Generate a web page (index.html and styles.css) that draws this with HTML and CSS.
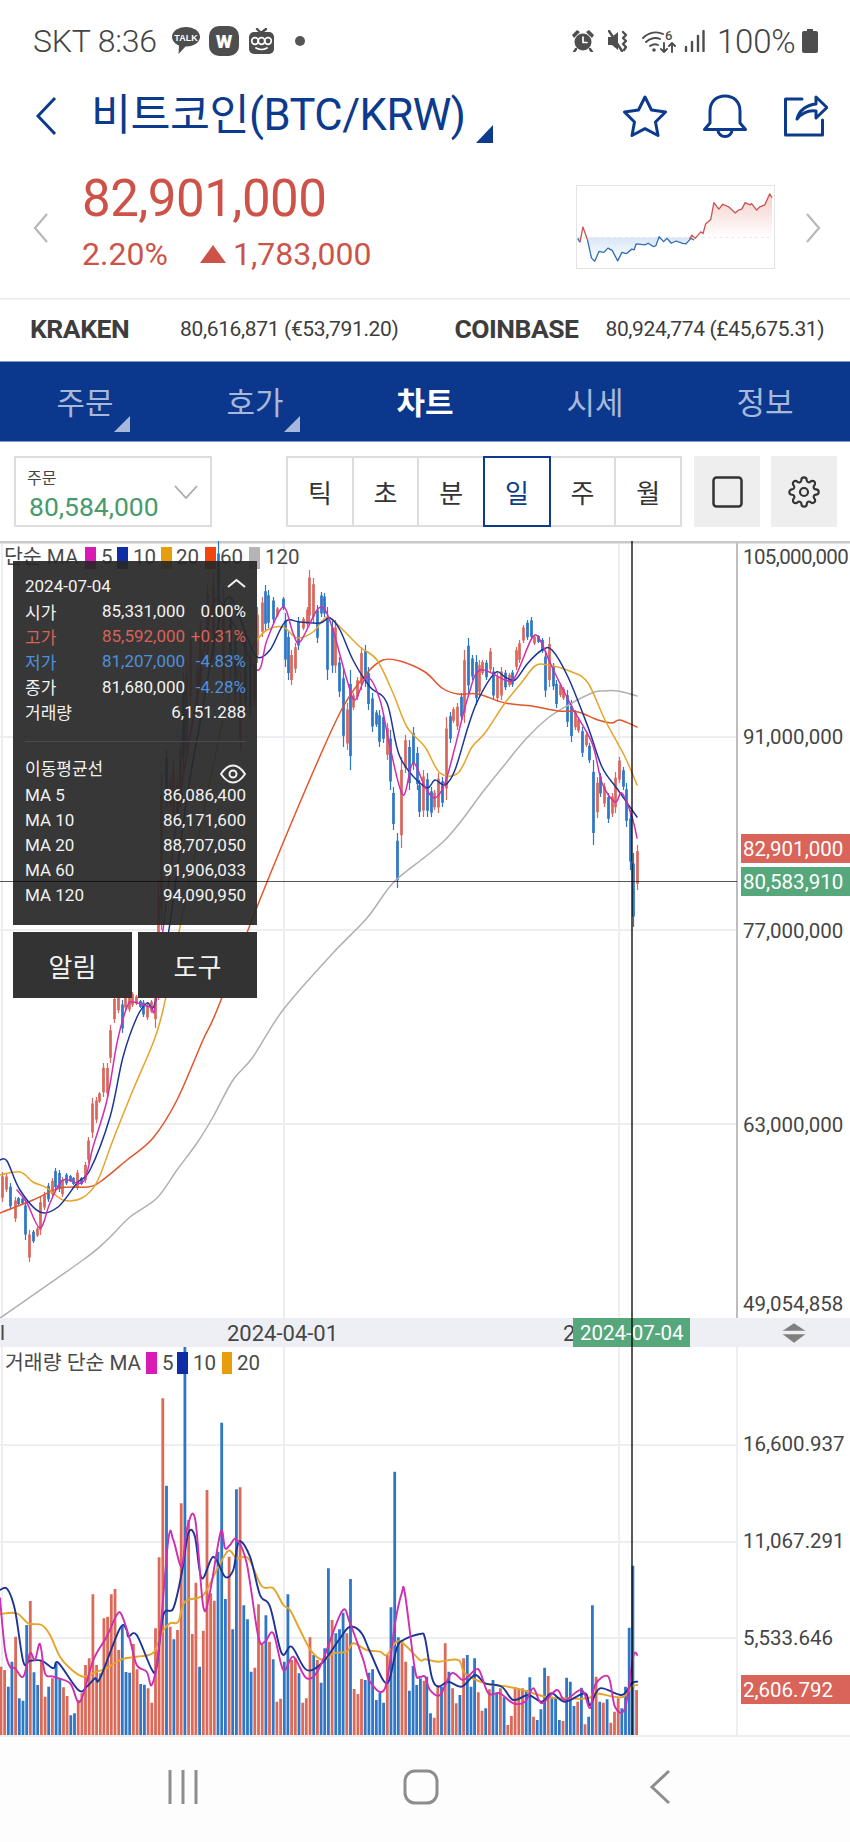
FILE: index.html
```html
<!DOCTYPE html>
<html lang="ko">
<head>
<meta charset="utf-8">
<title>비트코인(BTC/KRW)</title>
<link rel="stylesheet" href="styles.css">
</head>
<body>
<div class="phone">
  <div class="status">
    <span class="status-time">SKT 8:36</span>
    <svg class="st-talk" viewBox="0 0 28 28"><path class="fill-grey" d="M14 0C6.3 0 0 4.300 0 9.800c0 3.700 2.800 7 7 8.700l-.5 8.500 7-7.500c8 .3 14.500-4 14.500-9.700C28 4.300 21.700 0 14 0z"/><text class="talk-text" x="14" y="13.500" text-anchor="middle">TALK</text></svg>
    <span class="st-w">W</span>
    <svg class="st-face" viewBox="0 0 25 26"><path class="line-grey" d="M8 1l4 4 5-4"/><rect class="fill-grey" x="0" y="4" width="25" height="22" rx="5"/><circle class="eye-w" cx="6" cy="13" r="3.300"/><circle class="eye-w" cx="12.500" cy="13" r="3.300"/><circle class="eye-w" cx="19" cy="13" r="3.300"/><path class="eye-w" d="M7 20q5.500 3 11 0"/></svg>
    <span class="st-dot"></span>
    <div class="status-right">
      <svg class="st-alarm" viewBox="0 0 22 22"><circle class="fill-grey" cx="11" cy="12" r="8.500"/><path class="fill-grey" d="M0 5l5-5 3 2-6 6zM22 5l-5-5-3 2 6 6z"/><path class="line-grey" d="M4 19l-2 3M18 19l2 3"/><path class="eye-w" d="M11 7v5.500h4"/></svg>
      <svg class="st-mute" viewBox="0 0 21 22"><path class="fill-grey" d="M0 7h4l6-5v18l-6-5H0z"/><path class="line-grey" d="M1 1l13 20"/><path class="line-grey" d="M15 2l3 3-3 3 3 3-3 3 3 3-2 3"/></svg>
      <svg class="st-wifi" viewBox="0 0 34 24"><path class="line-thin" d="M1 9C7 3 15 2 21 5M4 13c4-4 10-5 14-3M8 17c3-2 6-2 8-1"/><circle class="fill-grey" cx="12" cy="21" r="1.800"/><text class="wifi-six" x="23" y="11">6</text><path class="line-thin" d="M22 14v9m-3-3l3 3 3-3M30 23v-9m-3 3l3-3 3 3"/></svg>
      <svg class="st-signal" viewBox="0 0 21 22"><path class="bar-line" d="M2 17v4M8 12v9M14 6v15M19.500 1v20"/></svg>
      <span class="status-batt">100%</span>
      <svg class="st-batt" viewBox="0 0 16 24"><path class="fill-grey" d="M5 0h6v2h3a2 2 0 0 1 2 2v18a2 2 0 0 1-2 2H2a2 2 0 0 1-2-2V4a2 2 0 0 1 2-2h3z"/></svg>
    </div>
  </div>

  <header class="head">
    <svg class="head-back" viewBox="0 0 22 40"><path d="M20 2L3 20l17 18"/></svg>
    <h1 class="head-title">비트코인(BTC/KRW)</h1>
    <span class="head-tri"></span>
    <div class="head-icons">
      <svg class="ic-star" viewBox="0 0 44 42"><path d="M22 2l6.500 13 14 2-10 10 2.500 13.500-13-6.800-13 6.800L11.500 27l-10-10 14-2z"/></svg>
      <svg class="ic-bell" viewBox="0 0 46 44"><path d="M2.500 35.500L8 29V17C8 8 14 2 23 2s15 6 15 15v12l5.500 6.500zM16 36a7 6.500 0 0 0 14 0"/></svg>
      <svg class="ic-share" viewBox="0 0 44 42"><path d="M18 4H1.500v36h37V25"/><path d="M13 24c2-9 10-14 19-15V2l11 10.500L32 23v-7c-8-1-14 2-19 8z"/></svg>
    </div>
  </header>

  <section class="quote">
    <svg class="quote-arrow left" viewBox="0 0 16 30"><path d="M14 1L2 15l12 14"/></svg>
    <div class="quote-text">
      <div class="quote-price">82,901,000</div>
      <div class="quote-sub">
        <span class="quote-pct">2.20%</span>
        <span class="quote-tri"></span>
        <span>1,783,000</span>
      </div>
    </div>
    <svg class="spark" viewBox="18 14 600 252" preserveAspectRatio="none">
      <defs>
        <linearGradient id="gr-red" x1="0" y1="0" x2="0" y2="1"><stop offset="0" stop-color="#f3cfcb"/><stop offset="1" stop-color="#fff"/></linearGradient>
        <linearGradient id="gr-blue" x1="0" y1="0" x2="0" y2="1"><stop offset="0" stop-color="#d8e6f6"/><stop offset="1" stop-color="#fff"/></linearGradient>
      </defs>
      <path fill="url(#gr-blue)" d="M20 172V175L27 187 35 172H48L62 235 72 245 85 215 100 218 112 205 125 212 142 244 155 218 168 222 185 208 192 210 198 192 225 195 235 190 250 200 258 198 265 172H282L285 185 292 175 305 190 320 183 340 190 350 192 365 175V172z"/>
      <path fill="url(#gr-red)" d="M368 172V165L378 172 395 155 402 160 410 130 425 118 435 65 450 85 462 70 480 78 500 97 510 88 520 85 530 65 545 72 550 68 565 88 575 78 590 72 605 38 612 50V172z"/>
      <path class="spark-base" d="M20 172H612"/>
      <path class="spark-blue" d="M20 175L27 187M50 180L62 235 72 245 85 215 100 218 112 205 125 212 142 244 155 218 168 222 185 208 192 210 198 192 225 195 235 190 250 200 258 198 268 170 282 185 292 175 305 190 320 183 340 190 350 192 365 175 375 180"/>
      <path class="spark-red" d="M27 187L36 140 50 180M360 178L368 165 378 175 395 155 402 160 410 130 425 118 435 65 450 85 462 70 480 78 500 97 510 88 520 85 530 65 545 72 550 68 565 88 575 78 590 72 605 38 612 50"/>
    </svg>
    <svg class="quote-arrow right" viewBox="0 0 16 30"><path d="M2 1l12 14L2 29"/></svg>
  </section>

  <section class="xchg">
    <b class="xchg-name kraken">KRAKEN</b>
    <span class="xchg-val">80,616,871 (€53,791.20)</span>
    <b class="xchg-name coinbase">COINBASE</b>
    <span class="xchg-val">80,924,774 (£45,675.31)</span>
  </section>

  <nav class="tabs">
    <div class="tab"><span class="tab-mark">주문</span></div>
    <div class="tab"><span class="tab-mark">호가</span></div>
    <div class="tab active"><span>차트</span></div>
    <div class="tab"><span>시세</span></div>
    <div class="tab"><span>정보</span></div>
  </nav>

  <div class="toolbar">
    <div class="order">
      <div class="order-text">
        <div class="order-label">주문</div>
        <div class="order-val">80,584,000</div>
      </div>
      <svg class="order-chev" viewBox="0 0 24 14"><path d="M1 1l11 12L23 1"/></svg>
    </div>
    <div class="seg">
      <div class="seg-cell">틱</div>
      <div class="seg-cell">초</div>
      <div class="seg-cell">분</div>
      <div class="seg-cell on">일</div>
      <div class="seg-cell">주</div>
      <div class="seg-cell">월</div>
    </div>
    <div class="tool-btn"><svg class="ic-rect" viewBox="0 0 31 32"><rect x="1.500" y="1.500" width="28" height="29" rx="3"/></svg></div>
    <div class="tool-btn"><svg class="ic-gear" viewBox="0 0 24 24"><circle cx="12" cy="12" r="3"/><path d="M19.400 15a1.650 1.650 0 0 0 .33 1.820l.06.06a2 2 0 0 1 0 2.830 2 2 0 0 1-2.830 0l-.06-.06a1.650 1.650 0 0 0-1.820-.33 1.650 1.650 0 0 0-1 1.510V21a2 2 0 0 1-2 2 2 2 0 0 1-2-2v-.09A1.650 1.650 0 0 0 9 19.400a1.650 1.650 0 0 0-1.820.33l-.06.06a2 2 0 0 1-2.830 0 2 2 0 0 1 0-2.830l.06-.06a1.650 1.650 0 0 0 .33-1.820 1.650 1.650 0 0 0-1.510-1H3a2 2 0 0 1-2-2 2 2 0 0 1 2-2h.09A1.650 1.650 0 0 0 4.600 9a1.650 1.650 0 0 0-.33-1.820l-.06-.06a2 2 0 0 1 0-2.830 2 2 0 0 1 2.830 0l.06.06a1.650 1.650 0 0 0 1.820.33H9a1.650 1.650 0 0 0 1-1.510V3a2 2 0 0 1 2-2 2 2 0 0 1 2 2v.09a1.650 1.650 0 0 0 1 1.510 1.650 1.650 0 0 0 1.820-.33l.06-.06a2 2 0 0 1 2.830 0 2 2 0 0 1 0 2.830l-.06.06a1.650 1.650 0 0 0-.33 1.820V9a1.650 1.650 0 0 0 1.510 1H21a2 2 0 0 1 2 2 2 2 0 0 1-2 2h-.09a1.650 1.650 0 0 0-1.510 1z"/></svg></div>
  </div>

  <div class="chart">
    <svg class="chart-svg" viewBox="0 541 850 1194">
      <defs>
        <clipPath id="clip-vol"><rect x="0" y="1347" width="640" height="388"/></clipPath>
      </defs>
      <path class="grid" d="M0 737H737M0 930H737M0 1124H737M0 1445H737M0 1542H737M0 1638H737M284 543V1318M619 543V1318M2 543V1318M284 1347V1735M619 1347V1735M2 1347V1735M737 1347V1735"/>
      <path class="axis" d="M737 543V1318"/>
      <path class="frame" d="M0 542H850"/>

      <g id="price-plot"></g>

      <text class="lg-text" x="4" y="564">단순 MA</text>
      <rect class="sw-mag" x="85" y="547" width="11" height="22"/><text class="lg-text" x="101" y="564">5</text>
      <rect class="sw-navy" x="117" y="547" width="11" height="22"/><text class="lg-text" x="133" y="564">10</text>
      <rect class="sw-org" x="161" y="547" width="11" height="22"/><text class="lg-text" x="176" y="564">20</text>
      <rect class="sw-red" x="205" y="547" width="11" height="22"/><text class="lg-text" x="220" y="564">60</text>
      <rect class="sw-gry" x="249" y="547" width="11" height="22"/><text class="lg-text" x="265" y="564">120</text>

      <text class="ax-label ax-tight" x="743" y="564">105,000,000</text>
      <text class="ax-label" x="743" y="744">91,000,000</text>
      <text class="ax-label" x="743" y="938">77,000,000</text>
      <text class="ax-label" x="743" y="1132">63,000,000</text>
      <text class="ax-label" x="743" y="1311">49,054,858</text>

      <rect class="tag-red" x="741" y="834" width="109" height="29"/>
      <text class="tag-text" x="743" y="856">82,901,000</text>
      <rect class="tag-grn" x="741" y="867" width="109" height="29"/>
      <text class="tag-text" x="743" y="889">80,583,910</text>

      <rect class="datebar" x="0" y="1318" width="850" height="29"/>
      <text class="ax-label" x="0" y="1340">l</text>
      <text class="date-label" x="227" y="1341">2024-04-01</text>
      <text class="date-label" x="563" y="1341">2</text>
      <rect class="tag-grn" x="573" y="1318" width="117" height="29"/>
      <text class="tag-text" x="580" y="1340">2024-07-04</text>
      <path class="sorter" d="M782 1331l12-8 12 8zM782 1334l12 9 12-9z"/>

      <g id="vol-plot" clip-path="url(#clip-vol)"></g>

      <text class="lg-text" x="5" y="1370">거래량 단순 MA</text>
      <rect class="sw-mag" x="146" y="1352" width="11" height="22"/><text class="lg-text" x="162" y="1370">5</text>
      <rect class="sw-navy" x="177" y="1352" width="11" height="22"/><text class="lg-text" x="193" y="1370">10</text>
      <rect class="sw-org" x="222" y="1352" width="10" height="22"/><text class="lg-text" x="237" y="1370">20</text>

      <text class="ax-label" x="743" y="1451">16,600.937</text>
      <text class="ax-label" x="743" y="1548">11,067.291</text>
      <text class="ax-label" x="743" y="1645">5,533.646</text>
      <rect class="tag-red" x="741" y="1675" width="109" height="29"/>
      <text class="tag-text" x="743" y="1697">2,606.792</text>
    </svg>

    <div class="legend-panel">
      <div class="panel-info">
        <div class="p-date"><span>2024-07-04</span><svg class="p-chev" viewBox="0 0 19 9"><path d="M1 8l8.500-7L18 8"/></svg></div>
        <div class="p-row"><span class="p-l">시가</span><span class="p-v">85,331,000</span><span class="p-p">0.00%</span></div>
        <div class="p-row red"><span class="p-l">고가</span><span class="p-v">85,592,000</span><span class="p-p">+0.31%</span></div>
        <div class="p-row blue"><span class="p-l">저가</span><span class="p-v">81,207,000</span><span class="p-p">-4.83%</span></div>
        <div class="p-row"><span class="p-l">종가</span><span class="p-v">81,680,000</span><span class="p-p blue">-4.28%</span></div>
        <div class="p-row wide"><span class="p-l">거래량</span><span>6,151.288</span></div>
        <div class="p-div"></div>
        <div class="p-row wide eye-row"><span class="p-l">이동평균선</span><svg class="p-eye" viewBox="0 0 26 20"><path d="M1 10C5 4 9 1.500 13 1.500S21 4 25 10c-4 6-8 8.500-12 8.500S5 16 1 10z"/><circle cx="13" cy="10" r="3.500"/></svg></div>
        <div class="p-row wide"><span class="p-l">MA 5</span><span>86,086,400</span></div>
        <div class="p-row wide"><span class="p-l">MA 10</span><span>86,171,600</span></div>
        <div class="p-row wide"><span class="p-l">MA 20</span><span>88,707,050</span></div>
        <div class="p-row wide"><span class="p-l">MA 60</span><span>91,906,033</span></div>
        <div class="p-row wide"><span class="p-l">MA 120</span><span>94,090,950</span></div>
      </div>
      <div class="panel-btns">
        <div class="p-btn">알림</div>
        <div class="p-btn">도구</div>
      </div>
    </div>

    <div class="cross-v"></div>
    <div class="cross-h"></div>
  </div>

  <footer class="navbar">
    <div class="nav-item"><svg class="nav-lines" viewBox="0 0 32 36"><path d="M3 1v34M16 1v34M29 1v34"/></svg></div>
    <div class="nav-item"><svg class="nav-home" viewBox="0 0 36 36"><rect x="2" y="2" width="32" height="32" rx="10"/></svg></div>
    <div class="nav-item"><svg class="nav-back" viewBox="0 0 22 36"><path d="M20 2L3 18l17 16"/></svg></div>
  </footer>
</div>
<script src="chart.js"></script>
</body>
</html>
```
FILE: styles.css
```css
* { box-sizing: border-box; }
html, body { margin: 0; padding: 0; background: #fff; }
body { font-family: Roboto, "Noto Sans CJK KR", sans-serif; }
.phone { width: 850px; height: 1842px; overflow: hidden; display: flex; flex-direction: column; background: #fff; }

/* status bar */
.status { height: 82px; flex: none; display: flex; align-items: center; padding-left: 33px; color: #555; }
.status-time { font-size: 32px; font-weight: 300; letter-spacing: -.2px; width: 139px; white-space: nowrap; color: #444; }
.status-batt { font-size: 33px; font-weight: 300; letter-spacing: -.2px; color: #444; width: 85px; margin-left: 12px; }
.fill-grey { fill: #4e4e4e; }
.line-grey { fill: none; stroke: #4e4e4e; stroke-width: 2.4; stroke-linecap: round; stroke-linejoin: round; }
.line-thin { fill: none; stroke: #4e4e4e; stroke-width: 1.9; stroke-linecap: round; stroke-linejoin: round; }
.bar-line { fill: none; stroke: #4e4e4e; stroke-width: 2.4; stroke-linecap: round; }
.eye-w { fill: none; stroke: #fff; stroke-width: 1.7; stroke-linecap: round; stroke-linejoin: round; }
.talk-text { fill: #fff; font: 700 9px "Liberation Sans", sans-serif; }
.wifi-six { fill: #4e4e4e; font: 500 13px Roboto, sans-serif; }
.st-talk { width: 28px; height: 28px; flex: none; }
.st-w { width: 30px; height: 30px; margin-left: 9px; border-radius: 10px; background: #4e4e4e; color: #fff; display: flex; align-items: center; justify-content: center; font: 900 19px Roboto, sans-serif; flex: none; }
.st-face { width: 25px; height: 26px; margin-left: 10px; flex: none; }
.st-dot { width: 10px; height: 10px; border-radius: 50%; background: #555; margin-left: 21px; flex: none; }
.status-right { margin-left: auto; display: flex; align-items: center; padding-right: 32px; }
.st-alarm { width: 22px; height: 22px; }
.st-mute { width: 21px; height: 22px; margin-left: 14px; }
.st-wifi { width: 34px; height: 24px; margin-left: 13px; }
.st-signal { width: 21px; height: 22px; margin-left: 8px; }
.st-batt { width: 16px; height: 24px; margin-left: 0; }

/* header */
.head { height: 68px; flex: none; display: flex; align-items: center; padding-left: 35px; color: #0c3a8c; position: relative; }
.head-back { width: 22px; height: 40px; fill: none; stroke: #0c3a8c; stroke-width: 3; flex: none; }
.head-title { margin: 0 0 0 34px; font-size: 43.500px; font-weight: 400; letter-spacing: -.5px; white-space: nowrap; line-height: 68px; width: 385px; flex: none; }
.head-tri { width: 0; height: 0; border-left: 17px solid transparent; border-bottom: 18px solid #0c3a8c; align-self: flex-end; margin: 0 0 7px 0; flex: none; }
.head-icons { margin-left: auto; display: flex; align-items: center; padding-right: 22px; }
.head-icons svg { fill: none; stroke: #0c3a8c; stroke-width: 3; stroke-linejoin: round; stroke-linecap: round; height: 44px; }
.ic-star { width: 44px; }
.ic-bell { width: 46px; margin-left: 35px; }
.ic-share { width: 44px; margin-left: 36px; }

/* quote */
.quote { height: 150px; flex: none; display: flex; border-bottom: 2px solid #eee; position: relative; }
.quote-arrow { width: 16px; height: 30px; fill: none; stroke: #b8b8b8; stroke-width: 2.2; flex: none; margin-top: 63px; }
.quote-arrow.left { margin-left: 33px; }
.quote-arrow.right { margin-left: 30px; }
.quote-text { margin-left: 33px; width: 494px; padding-top: 23px; color: #cd5349; }
.quote-price { font-size: 51px; line-height: 52px; letter-spacing: -.5px; }
.quote-sub { margin-top: 13px; font-size: 32px; line-height: 32px; display: flex; align-items: center; }
.quote-pct { width: 118px; }
.quote-tri { width: 0; height: 0; border-left: 13.5px solid transparent; border-right: 13.5px solid transparent; border-bottom: 18px solid #cd5349; margin-right: 7px; }
.spark { width: 199px; height: 84px; margin-top: 35px; border: 1px solid #e3e3e3; flex: none; }
.spark-base { fill: none; stroke: #ddd; stroke-width: 2; stroke-dasharray: 9 9; }
.spark-blue, .spark-red { fill: none; stroke-width: 4; stroke-linejoin: round; }
.spark-blue { stroke: #2f6db5; }
.spark-red { stroke: #c9564f; }

/* exchanges */
.xchg { height: 61px; flex: none; display: flex; align-items: center; padding-bottom: 4px; color: #3d3d3d; white-space: nowrap; }
.xchg-name { font-size: 26.500px; font-weight: 700; letter-spacing: -.5px; }
.xchg-val { font-size: 21px; letter-spacing: -.35px; }
.kraken { margin-left: 30px; width: 150px; }
.coinbase { margin-left: 56px; width: 151px; }

/* tabs */
.tabs { height: 81px; flex: none; display: flex; background: #0b388c; border-top: 1px solid #7f9ac8; border-bottom: 1px solid #7f9ac8; }
.tab { flex: 1; display: flex; align-items: center; justify-content: center; font-size: 31px; color: #a7b8da; padding-bottom: 3px; }
.tab.active { color: #fff; font-weight: 700; }
.tab-mark { position: relative; }
.tab-mark::after { content: ""; position: absolute; right: -16px; bottom: -9px; width: 0; height: 0; border-left: 16px solid transparent; border-bottom: 16px solid #a7b8da; }

/* toolbar */
.toolbar { height: 99px; flex: none; display: flex; align-items: flex-start; padding: 14px 0 0 14px; }
.order { width: 198px; height: 71px; border: 2px solid #ddd; display: flex; align-items: center; padding: 6px 0 0 13px; }
.order-label { font-size: 16px; line-height: 20px; color: #444; margin-top: 1px; margin-left: -2px; }
.order-val { font-size: 26.500px; line-height: 30px; color: #479a6e; margin-top: 3px; }
.order-chev { width: 24px; height: 14px; fill: none; stroke: #aaa; stroke-width: 1.8; margin: -6px 12px 0 auto; }
.seg { width: 396px; height: 71px; margin-left: 74px; display: flex; border: 2px solid #ddd; }
.seg-cell { flex: 1; display: flex; align-items: center; justify-content: center; font-size: 26px; color: #333; border-left: 2px solid #ddd; margin-top: -2px; margin-bottom: -2px; }
.seg-cell:first-child { border-left: 0; }
.seg-cell.on { color: #0c3a8c; border: 2px solid #0c3a8c; }
.seg-cell.on + .seg-cell { border-left: 0; }
.tool-btn { width: 66px; height: 71px; margin-left: 12px; background: #eee; display: flex; align-items: center; justify-content: center; }
.tool-btn + .tool-btn { margin-left: 11px; }
.ic-rect { width: 31px; height: 32px; fill: none; stroke: #333; stroke-width: 2.5; }
.ic-gear { width: 32px; height: 32px; fill: none; stroke: #333; stroke-width: 1.6; }

/* chart */
.chart { height: 1194px; flex: none; position: relative; overflow: hidden; }
.chart-svg { display: block; width: 850px; height: 1194px; }
.grid { fill: none; stroke: #eceef2; stroke-width: 2; }
.axis { fill: none; stroke: #bdbdbd; stroke-width: 2; }
.frame { fill: none; stroke: #c9c9c9; stroke-width: 3; }
.ax-label { font: 400 20.500px Roboto, sans-serif; fill: #454545; }
.ax-tight { letter-spacing: -.6px; }
.date-label { font: 400 22px Roboto, sans-serif; fill: #454545; }
.tag-text { font: 400 20.500px Roboto, sans-serif; fill: #fff; }
.lg-text { font: 400 20.500px Roboto, "Noto Sans CJK KR", sans-serif; fill: #4a4a4a; }
.sw-mag { fill: #d81bb5; }
.sw-navy { fill: #0f2ea6; }
.sw-org { fill: #e89d0c; }
.sw-red { fill: #f2460e; }
.sw-gry { fill: #b5b5b5; }
.tag-red { fill: #d9645a; }
.tag-grn { fill: #57a77c; }
.datebar { fill: #eeeff4; }
.sorter { fill: #7f7f7f; stroke: #eeeff4; stroke-width: .5; }
.c-red { fill: none; stroke: #d9675c; }
.c-blue { fill: none; stroke: #2e76c6; }
.c-wick { stroke-width: 1.2; }
.c-body { stroke-width: 2.7; }
.v-red { fill: none; stroke: #dc6a58; stroke-width: 2.8; }
.v-blue { fill: none; stroke: #2e76c6; stroke-width: 2.8; }
.ma { fill: none; stroke-linejoin: round; stroke-linecap: round; stroke-width: 1.5; }
.ma-mag { stroke: #cf2fb0; }
.ma-navy { stroke: #1c3596; }
.ma-org { stroke: #e5a42a; }
.ma-red { stroke: #e2552b; }
.ma-gry { stroke: #b0b0b0; }
.vma { stroke-width: 1.9; }

.legend-panel { position: absolute; left: 13px; top: 20px; width: 244px; color: #f2f2f2; font-size: 17px; }
.panel-info { height: 364px; background: rgba(40,40,40,.93); padding: 12.500px 11px 0 12px; }
.p-date { height: 25px; display: flex; justify-content: space-between; align-items: center; }
.p-chev { width: 19px; height: 9px; fill: none; stroke: #f2f2f2; stroke-width: 2; margin-top: -6px; }
.p-row { height: 25.200px; display: flex; align-items: center; white-space: nowrap; }
.p-l { width: 77px; flex: none; }
.p-v { width: 82px; text-align: right; flex: none; }
.p-p { flex: 1; text-align: right; }
.p-row.wide { justify-content: space-between; }
.p-row.wide .p-l { width: auto; }
.red { color: #d9625a; }
.blue { color: #4f8fdc; }
.p-div { height: 1px; background: #4a4a4a; margin: 17px 0 13px; }
.eye-row { align-items: flex-start; height: 26.700px; }
.p-eye { width: 26px; height: 20px; fill: none; stroke: #f2f2f2; stroke-width: 2; margin-top: 9px; }
.panel-btns { display: flex; justify-content: space-between; margin-top: 7px; }
.p-btn { width: 119px; height: 66px; background: #333; display: flex; align-items: center; justify-content: center; font-size: 26px; }
.cross-v { position: absolute; left: 631px; top: 0; width: 1.500px; height: 1194px; background: rgba(0,0,0,.65); }
.cross-h { position: absolute; left: 0; top: 339.500px; width: 737px; height: 1.500px; background: rgba(0,0,0,.65); }

/* nav bar */
.navbar { flex: 1; display: flex; justify-content: center; align-items: center; border-top: 2px solid #efefef; padding: 0 8px 5px 0; background: #fdfdfd; }
.nav-item { width: 238.500px; display: flex; justify-content: center; }
.navbar svg { fill: none; stroke: #8d8d8d; stroke-width: 3; }
.nav-lines { width: 32px; height: 36px; }
.nav-home { width: 36px; height: 36px; }
.nav-back { width: 22px; height: 36px; }
```
FILE: chart.js
```js
(function () {
  var NS = 'http://www.w3.org/2000/svg';

  function add(parent, cls, d) {
    var p = document.createElementNS(NS, 'path');
    p.setAttribute('class', cls);
    p.setAttribute('d', d);
    parent.appendChild(p);
  }

  // Catmull-Rom through the points, written as cubic beziers.
  function smooth(pts) {
    var d = 'M' + pts[0][0] + ' ' + pts[0][1];
    for (var i = 0; i < pts.length - 1; i++) {
      var p0 = pts[i - 1] || pts[i], p1 = pts[i], p2 = pts[i + 1], p3 = pts[i + 2] || p2;
      d += 'C' + (p1[0] + (p2[0] - p0[0]) / 6).toFixed(1) + ' ' + (p1[1] + (p2[1] - p0[1]) / 6).toFixed(1) +
        ' ' + (p2[0] - (p3[0] - p1[0]) / 6).toFixed(1) + ' ' + (p2[1] - (p3[1] - p1[1]) / 6).toFixed(1) +
        ' ' + p2[0] + ' ' + p2[1];
    }
    return d;
  }

  function candles(list) {
    var w = '', b = '';
    list.forEach(function (c) {
      var h = c[2] - c[1], x = c[0] + 0.5;
      w += 'M' + x + ' ' + c[1] + 'V' + c[2];
      b += 'M' + x + ' ' + (c[1] + h * 0.14).toFixed(1) + 'V' + (c[2] - h * 0.14).toFixed(1);
    });
    return { wick: w, body: b };
  }

  // [x, high y, low y]
  var red = [[2,1172,1202],[6,1174,1192],[15,1197,1222],[29,1230,1262],[37,1227,1237],[40,1197,1235],[44,1192,1210],[52,1178,1197],[62,1177,1197],[77,1170,1190],[85,1162,1183],[88,1137,1163],[92,1098,1138],[96,1097,1123],[99,1092,1103],[103,1063,1097],[107,1063,1098],[110,1025,1063],[114,995,1023],[118,993,1013],[125,993,1010],[129,995,1012],[132,992,1007],[136,995,1005],[147,1003,1020],[151,1000,1013],[155,963,1028],
    [158,880,1000],[161,773,930],[170,777,807],[173,760,830],[177,777,823],[180,740,807],[186,660,760],[190,630,707],[197,663,707],[200,620,690],[207,583,663],[213,573,663],[223,587,697],[240,673,750],[254,657,707],
    [257,607,663],[262,597,637],[277,607,617],[291,650,685],[295,643,673],[303,617,630],[307,607,627],[309,570,623],[313,578,623],[335,620,673],[347,703,750],[353,693,710],[357,677,700],[361,647,690],[387,723,760],[401,757,848],[405,735,773],[423,770,817],
    [434,790,810],[438,773,813],[446,717,800],[453,707,723],[457,703,730],[464,650,723],[479,660,697],[482,660,675],[490,648,673],[497,673,702],[501,667,700],[509,673,687],[516,647,670],[519,640,663],[523,625,643],[534,635,645],[549,637,687],[560,683,697],[563,687,700],[575,710,730],[578,717,733],[586,733,747],[597,777,818],[604,783,807],[612,793,817],[615,772,813],[619,757,783],[637,845,890]];
  var blue = [[10,1183,1210],[18,1197,1205],[22,1198,1204],[25,1200,1240],[33,1230,1243],[48,1183,1202],[55,1168,1190],[59,1170,1192],[66,1173,1185],[70,1175,1182],[73,1177,1185],[81,1177,1185],[122,1000,1033],[140,1000,1008],[143,1000,1017],
    [166,750,807],[183,673,770],[218,541,630],[230,597,680],[235,630,703],[245,630,713],[250,647,717],
    [265,585,630],[268,590,628],[273,597,623],[283,597,610],[285,613,667],[288,630,680],[298,617,650],[317,605,643],[321,592,617],[324,593,617],[327,607,680],[332,620,673],[339,657,697],[343,667,747],[350,670,770],[365,645,687],[368,667,710],[372,693,732],[376,710,727],[379,710,747],[383,713,743],[390,730,790],[393,787,830],[397,833,888],[409,740,790],[413,727,770],[417,747,790],[419,780,817],
    [427,773,817],[431,787,817],[442,777,807],[450,712,743],[461,693,720],[468,638,693],[472,655,680],[476,655,705],[486,660,680],[493,667,700],[505,670,690],[512,670,687],[527,620,640],[531,617,640],[538,635,643],[542,638,653],[545,650,697],[553,663,690],[556,680,708],[567,690,727],[571,700,742],[582,727,757],[589,743,763],[593,760,845],[600,773,797],[608,793,823],[623,767,790],[626,783,827],[630,810,870],[633,853,927]];

  var price = document.getElementById('price-plot');
  var r = candles(red), b = candles(blue);
  add(price, 'c-red c-wick', r.wick);
  add(price, 'c-red c-body', r.body);
  add(price, 'c-blue c-wick', b.wick);
  add(price, 'c-blue c-body', b.body);

  var ma = {
    'ma-gry': [[0,1318],[83,1260],[107,1240],[130,1217],[157,1198],[177,1170],[197,1143],[213,1117],[233,1080],[253,1057],[283,1010],[333,953],[367,918],[393,883],[425,857],[445,840],[462,820],[482,793],[502,768],[525,740],[548,718],[572,703],[592,693],[602,691],[618,691],[637,696]],
    'ma-red': [[0,1213],[33,1200],[60,1188],[87,1187],[100,1182],[127,1160],[153,1138],[177,1100],[203,1040],[217,1010],[257,907],[283,843],[317,763],[343,707],[367,673],[383,660],[400,661],[425,672],[442,688],[458,694],[478,694],[505,703],[532,706],[558,711],[578,712],[598,720],[612,723],[620,720],[637,727]],
    'ma-org': [[0,1175],[20,1172],[33,1182],[47,1188],[63,1200],[82,1198],[97,1182],[113,1140],[133,1090],[153,1043],[163,1010],[180,927],[200,830],[227,703],[243,663],[257,640],[267,630],[283,627],[297,638],[313,632],[327,617],[340,627],[360,647],[377,660],[393,693],[407,727],[425,747],[440,773],[458,773],[472,747],[485,733],[505,703],[522,682],[535,666],[548,665],[572,672],[588,683],[605,720],[625,757],[637,785]],
    'ma-navy': [[0,1160],[7,1161],[20,1190],[40,1212],[58,1207],[77,1183],[90,1170],[110,1117],[123,1057],[137,1017],[147,1003],[155,1003],[170,923],[187,797],[200,723],[217,630],[230,597],[247,637],[257,657],[270,650],[285,622],[300,622],[320,623],[330,618],[340,630],[353,660],[370,687],[387,703],[400,757],[425,787],[435,780],[445,785],[455,770],[468,727],[478,700],[495,673],[505,677],[515,680],[528,663],[542,650],[552,650],[568,677],[588,727],[602,767],[618,790],[637,817]],
    'ma-mag': [[17,1190],[27,1203],[40,1228],[50,1203],[63,1180],[83,1182],[93,1147],[107,1100],[117,1043],[127,1007],[133,1002],[150,1007],[155,1007],[163,930],[180,797],[197,697],[213,603],[233,623],[257,670],[267,640],[283,607],[293,633],[300,642],[317,610],[325,610],[333,630],[347,680],[355,700],[367,677],[380,700],[390,747],[403,795],[413,763],[425,787],[435,798],[445,783],[455,747],[468,697],[480,670],[505,680],[515,677],[532,638],[540,640],[552,667],[572,707],[592,743],[602,783],[615,802],[622,793],[632,817],[637,838]]
  };
  Object.keys(ma).forEach(function (k) { add(price, 'ma ' + k, smooth(ma[k])); });

  // Volume bars: colour + top edge, read on a 3x grid of the panel.
  var volLeft = 'r980 r990 b1040 b965 r890 b1075 b1082 b855 r783 b997 b1035 r960 r1070 b1040 r1015 b970 b1015 r1042 r1068 b1126 b1120 r1080 r1060 r975 r955 r763 r975 r1000 r835 r830 r763 r747 r930 b858 b996 b998 r912 r988 b1032 b1034 r1045 r1088 r865 r652 r175 b437 r860 b898 r870 r490 b20 r540 r882 r728 b980 r872 r450 r760 r782 b635 b248 b777 r650 b868 b448 r442 b796 b838 b995 r983 r793 r915 b826 r905 b958 r1085 r1076 b965 b763 r960 r955 b1000 r1088 r1075 r892 b945 r960 b1028 b925 b685 r840 b880 b868 b818 r880 b717 r1047 r1062 r1017 b1020 b998 b988 b1080 b1058 b1088 r945 b802 b395 b892 r900 r965 b1052 b978 b1035 b1015 r1022'.split(' ');
  var volRight = 'b1010 b1120 r1133 r1035 b1040 r910 b995 r1045 r1090 b1065 r955 b945 b1040 b955 r1057 r1112 b1105 r1048 b1020 b1058 r1045 b1072 r1155 r1128 r1042 r1045 r1045 b1050 b1012 r1130 b1140 b1108 b983 r1008 b1070 b1072 b1140 r1143 b1013 b1025 b1098 r1085 b1043 r1153 b1130 b796 r1010 b1085 r1088 b1078 r1148 r1115 r1075 b1105 b1040 b863 b677 r1050'.split(' ');
  var vr = '', vb = '';
  function bars(list, x0, step) {
    list.forEach(function (s, i) {
      var x = (x0 + i * step).toFixed(1), top = (1340 + parseInt(s.slice(1), 10) / 3).toFixed(1);
      var seg = 'M' + x + ' ' + top + 'V1735';
      if (s[0] === 'r') vr += seg; else vb += seg;
    });
  }
  bars(volLeft, 0.9, 3.68);
  bars(volRight, 426.8, 3.68);
  var vol = document.getElementById('vol-plot');
  add(vol, 'v-red', vr);
  add(vol, 'v-blue', vb);

  function vmap(left, right) {
    return left.map(function (p) { return [+(p[0] / 3).toFixed(1), +(1340 + p[1] / 3).toFixed(1)]; })
      .concat(right.map(function (p) { return [+(425 + p[0] / 3).toFixed(1), +(1340 + p[1] / 3).toFixed(1)]; }));
  }
  var vma = {
    'ma-org': vmap([[0,822],[50,820],[85,850],[125,855],[150,885],[180,950],[210,985],[250,1010],[290,995],[320,985],[365,958],[410,950],[460,938],[485,880],[510,850],[535,845],[555,785],[610,765],[650,690],[685,632],[710,655],[745,655],[785,738],[820,745],[850,795],[870,810],[900,870],[935,935],[970,960],[1000,940],[1040,935],[1060,910],[1100,930],[1140,935],[1160,945],[1190,905],[1215,915],[1260,960]],
      [[0,958],[40,965],[100,960],[120,1000],[180,1030],[250,1040],[300,1052],[360,1070],[420,1075],[490,1075],[510,1060],[590,1072],[620,1040],[637,1035]]),
    'ma-navy': vmap([[0,750],[22,747],[45,810],[70,965],[90,962],[125,962],[160,985],[175,968],[235,1050],[260,1040],[285,1015],[300,1015],[360,865],[380,870],[385,890],[410,885],[455,988],[470,980],[490,825],[520,805],[545,700],[565,580],[585,590],[605,715],[640,650],[675,710],[700,690],[717,605],[750,650],[780,765],[810,800],[845,940],[875,920],[920,990],[970,965],[1020,895],[1050,860],[1085,880],[1110,935],[1160,1030],[1190,925],[1210,900],[1260,882]],
      [[0,895],[20,1010],[40,1040],[70,1025],[110,1040],[150,1005],[180,1030],[230,1040],[265,1080],[310,1065],[350,1085],[380,1060],[420,1085],[480,1060],[495,1095],[525,1045],[590,1065],[620,1030],[637,1025]]),
    'ma-mag': vmap([[0,775],[15,930],[30,980],[45,985],[70,1010],[90,940],[105,960],[120,912],[135,1000],[160,1010],[210,1030],[240,1085],[280,960],[320,890],[350,825],[365,825],[390,900],[410,975],[440,995],[455,1035],[475,940],[505,600],[520,600],[545,680],[560,570],[585,535],[610,800],[630,755],[662,575],[675,625],[690,615],[710,598],[740,670],[775,890],[795,905],[820,880],[850,990],[880,950],[920,1015],[960,980],[1025,815],[1050,850],[1090,960],[1110,1025],[1155,1045],[1185,850],[1205,760],[1215,762],[1245,990],[1260,1010]],
      [[0,1010],[15,1050],[45,1065],[80,1000],[115,1020],[150,990],[165,995],[190,1060],[225,1060],[265,1090],[300,1085],[325,1045],[350,1090],[395,1050],[420,1080],[470,1050],[495,1105],[510,1035],[550,1010],[570,1100],[600,1105],[625,950],[637,945]])
  };
  Object.keys(vma).forEach(function (k) { add(vol, 'ma vma ' + k, smooth(vma[k])); });
})();
```
